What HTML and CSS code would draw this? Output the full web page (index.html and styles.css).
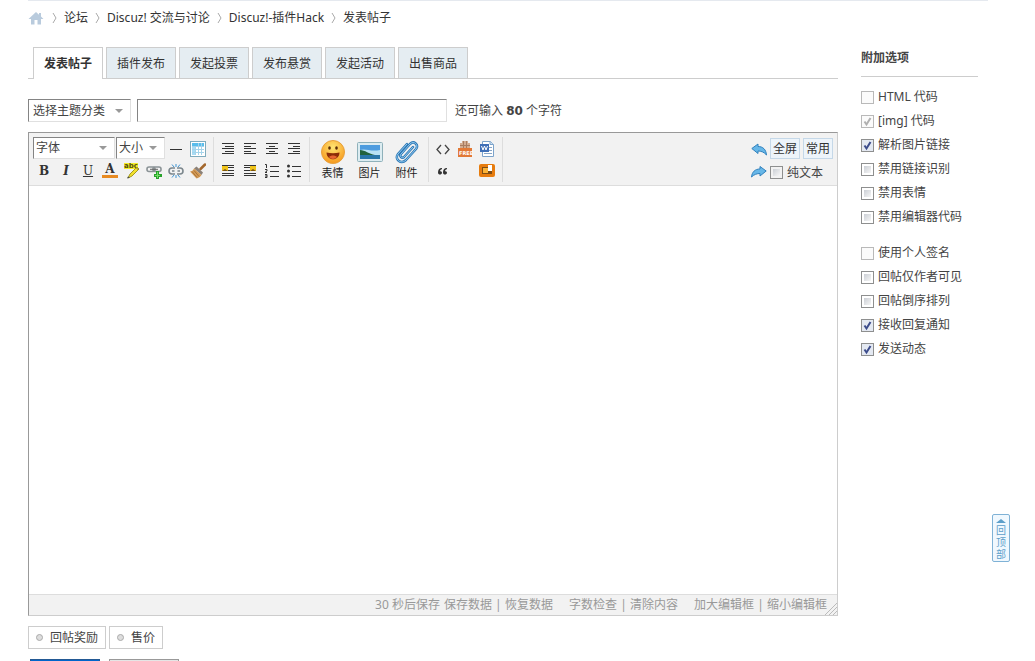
FILE: index.html
```html
<!DOCTYPE html>
<html lang="zh-CN">
<head>
<meta charset="utf-8">
<title>发表帖子</title>
<link rel="stylesheet" href="styles.css">
</head>
<body>
<div class="page">
  <nav class="crumbs">
    <a class="home" href="#" aria-label="首页"><svg width="16" height="14" viewBox="0 0 16 14"><path d="M8 1 0.5 8H3v5.500h3.500V9h3v4.500H13V8h2.500L13 5.600V2h-2v1.700z" fill="#b9cbdd"/></svg></a>
    <svg class="sep" width="19" height="14" viewBox="0 0 19 14"><path d="M8 2l3 5-3 5" fill="none" stroke="#aaa"/></svg>
    <a href="#">论坛</a>
    <svg class="sep" width="19" height="14" viewBox="0 0 19 14"><path d="M8 2l3 5-3 5" fill="none" stroke="#aaa"/></svg>
    <a href="#">Discuz! 交流与讨论</a>
    <svg class="sep" width="19" height="14" viewBox="0 0 19 14"><path d="M8 2l3 5-3 5" fill="none" stroke="#aaa"/></svg>
    <a href="#">Discuz!-插件Hack</a>
    <svg class="sep" width="19" height="14" viewBox="0 0 19 14"><path d="M8 2l3 5-3 5" fill="none" stroke="#aaa"/></svg>
    <a href="#">发表帖子</a>
  </nav>
  <div class="columns">
    <main class="main">
      <nav class="tabs">
        <a class="tab active" href="#">发表帖子</a>
        <a class="tab" href="#">插件发布</a>
        <a class="tab" href="#">发起投票</a>
        <a class="tab" href="#">发布悬赏</a>
        <a class="tab" href="#">发起活动</a>
        <a class="tab" href="#">出售商品</a>
      </nav>
      <div class="subject">
        <select class="drop drop-type" aria-label="主题分类"><option>选择主题分类</option></select>
        <input class="title" type="text" aria-label="标题">
        <span class="remain">还可输入 <strong>80</strong> 个字符</span>
      </div>
      <div class="editor">
        <div class="toolbar">
          <div class="group first">
            <div class="row">
              <select class="drop drop-font" aria-label="字体"><option>字体</option></select>
              <select class="drop drop-size" aria-label="大小"><option>大小</option></select>
              <button class="tool" aria-label="分隔线"><svg width="16" height="16"><path d="M2 8.500h12" stroke="#333"/></svg></button>
              <button class="tool" aria-label="表格"><svg width="16" height="16"><rect x=".5" y=".5" width="15" height="15" fill="#fff" stroke="#7fabbd"/><path d="M2 2h12v3H2z" fill="#58bdec"/><path d="M2 5h3v9H2z" fill="#a9dcf5"/><path d="M2 5.500h12M2 8.500h12M2 11.500h12M5.500 5v9M8.500 2v12M11.500 2v12" stroke="#a4d4eb"/></svg></button>
            </div>
            <div class="row">
              <button class="tool letter bold">B</button>
              <button class="tool letter italic">I</button>
              <button class="tool letter under">U</button>
              <button class="tool letter color"><span>A</span></button>
              <button class="tool" aria-label="背景色"><svg width="16" height="16" viewBox="0 0 16 16"><path d="M0 0h14v6H0z" fill="#f5ed27"/><text x="0" y="5" class="abc">abc</text><path d="M4 15l2-4 7-7 2 2-7 7z" fill="#f2e12d" stroke="#a59a21"/><path d="M3 15.500l1-2 2 1z" fill="#444"/><path d="M12 4.500l2.500 2.500" stroke="#8a7b3b"/></svg></button>
              <button class="tool" aria-label="添加链接"><svg width="16" height="16" viewBox="0 0 16 16"><g fill="none" stroke="#8b9396" stroke-width="1.600"><rect x="1" y="4" width="8" height="4.500" rx="2"/><rect x="7" y="4" width="8" height="4.500" rx="2"/></g><path d="M4 6.300h8" stroke="#666"/><path d="M10 8h3v3h3v3h-3v2h-3v-2H8v-3h2z" fill="#27a32b"/><path d="M11.500 9v6M9 12.500h5" stroke="#75dd68"/></svg></button>
              <button class="tool" aria-label="移除链接"><svg width="16" height="16" viewBox="0 0 16 16"><g fill="none" stroke="#7c878d" stroke-width="1.600"><path d="M7 5H4a3 3 0 000 6h3M9 5h3a3 3 0 010 6H9M4 8h2.500M9.500 8H12"/></g><path d="M8 4V1M6 4L4 1.500M10 4l2-2.500M8 12v3M6 12l-2 2.500M10 12l2 2.500" stroke="#3f94d2"/></svg></button>
              <button class="tool" aria-label="清除格式"><svg width="16" height="16" viewBox="0 0 16 16"><path d="M15 1.500L10.500 6" stroke="#a3672d" stroke-width="2.500" stroke-linecap="round"/><path d="M6.500 3.500l6.500 6-1.500 2.500L4 5.500z" fill="#8b8178"/><path d="M4 5.500l7.500 6.500c-1 2-3 3-5 3.500L0 8.500c2 0 3-1 4-3z" fill="#d49a55"/><path d="M2 8.500l5 6M4 7.500l5 6" stroke="#a8743a"/></svg></button>
            </div>
          </div>
          <div class="group">
            <div class="row">
              <button class="tool" aria-label="自动排版"><svg width="16" height="16"><path d="M2 2.500h12M5 5.500h9M2 7.500h12M5 10.500h9M2 12.500h12" stroke="#333"/></svg></button>
              <button class="tool" aria-label="居左"><svg width="16" height="16"><path d="M2 2.500h12M2 5.500h7M2 7.500h12M2 10.500h7M2 12.500h12" stroke="#333"/></svg></button>
              <button class="tool" aria-label="居中"><svg width="16" height="16"><path d="M2 2.500h12M5 5.500h6M2 7.500h12M5 10.500h6M2 12.500h12" stroke="#333"/></svg></button>
              <button class="tool" aria-label="居右"><svg width="16" height="16"><path d="M2 2.500h12M7 5.500h7M2 7.500h12M7 10.500h7M2 12.500h12" stroke="#333"/></svg></button>
            </div>
            <div class="row">
              <button class="tool" aria-label="左浮动"><svg width="16" height="16"><path d="M2 2.500h12M8 4.500h6M8 7.500h6M2 10.500h12M2 12.500h12" stroke="#333"/><path d="M2 3h6v5H2z" fill="#f0c419"/><path d="M2 8l3-2 3 2z" fill="#7a5412"/></svg></button>
              <button class="tool" aria-label="右浮动"><svg width="16" height="16"><path d="M2 2.500h12M2 4.500h6M2 7.500h6M2 10.500h12M2 12.500h12" stroke="#333"/><path d="M8 3h6v5H8z" fill="#f0c419"/><path d="M8 8l3-2 3 2z" fill="#7a5412"/></svg></button>
              <button class="tool" aria-label="编号列表"><svg width="16" height="16"><path d="M6 3.500h9M6 8.500h9M6 13.500h9M1 1.500h1.500V5M1 6.500h2v1.500l-2 1.500h2M1 11.500h2v3H1M1 13h2" fill="none" stroke="#333"/></svg></button>
              <button class="tool" aria-label="项目列表"><svg width="16" height="16"><path d="M6 3.500h9M6 8.500h9M6 13.500h9" stroke="#333"/><g fill="#333"><circle cx="2.500" cy="3" r="1.500"/><circle cx="2.500" cy="8" r="1.500"/><circle cx="2.500" cy="13" r="1.500"/></g></svg></button>
            </div>
          </div>
          <div class="group big">
            <button class="large"><svg width="26" height="26" viewBox="0 0 26 26"><defs><radialGradient id="face" cx=".5" cy=".3" r=".7"><stop offset="0" stop-color="#ffe573"/><stop offset="1" stop-color="#f6981c"/></radialGradient></defs><circle cx="13" cy="13" r="11.500" fill="url(#face)" stroke="#e8a13c"/><ellipse cx="9.500" cy="9" rx="1.300" ry="1.800" fill="#5a2c07"/><ellipse cx="16.500" cy="9" rx="1.300" ry="1.800" fill="#5a2c07"/><path d="M6.500 13.500c4 1 9 1 13 0 0 9-13 9-13 0z" fill="#8c2c08"/><path d="M9 18c2-2 6-2 8 0-2 2.500-6 2.500-8 0z" fill="#e76431"/></svg>表情</button>
            <button class="large"><svg width="26" height="26" viewBox="0 0 26 26"><rect x=".5" y="3.500" width="25" height="19" rx="1" fill="#dcecf1" stroke="#8fb1ba"/><path d="M3 6h20v14H3z" fill="#4d9cdf"/><path d="M3 11c6-2 10 2 20 0v5H3z" fill="#b9e2f5"/><path d="M3 11c5 0 9 4 15 5H3z" fill="#23633d"/><path d="M3 16h20v4H3z" fill="#2b77a9"/></svg>图片</button>
            <button class="large"><svg width="26" height="26" viewBox="0 0 26 26"><g fill="none" stroke-linecap="round"><path d="M19 8l-9 10c-2 2-5-1-3-3l9-10c4-4 9 1 6 5L12 21c-5 5-12-1-8-6l9-10" stroke="#2e78b5" stroke-width="2.500"/><path d="M19 8l-9 10c-2 2-5-1-3-3l9-10c4-4 9 1 6 5L12 21c-5 5-12-1-8-6l9-10" stroke="#8fc9ef"/></g></svg>附件</button>
          </div>
          <div class="group codes">
            <div class="row">
              <button class="tool" aria-label="代码"><svg width="16" height="16"><path d="M6 4L2 8.500 6 13M10 4l4 4.500L10 13" fill="none" stroke="#444" stroke-width="1.300"/></svg></button>
              <button class="tool" aria-label="免费信息"><svg width="16" height="16" viewBox="0 0 16 16"><path d="M5 0h6v2h2v5H3V2h2z" fill="#d3ad91"/><path d="M6.500 0v7M9.500 0v7M3 4.500h10" stroke="#a77c60"/><path d="M1 7h14v9H1z" fill="#e27935"/><text x="2" y="14" class="free">FREE</text></svg></button>
              <button class="tool" aria-label="从 Word 粘贴"><svg width="16" height="16" viewBox="0 0 16 16"><path d="M3.500.5h8l3 3v12h-11z" fill="#fff" stroke="#7ca3ca"/><path d="M11 .5v3h3.500" fill="#cfe3f5" stroke="#7ca3ca"/><path d="M10 6.500h3M10 9.500h3M5 12.500h8" stroke="#86a5c7"/><path d="M1 3h9v8H1z" fill="#3f6fb7"/><path d="M2.500 5l1.500 4 1.500-4L7 9l1.500-4" fill="none" stroke="#fff"/></svg></button>
            </div>
            <div class="row">
              <button class="tool" aria-label="引用"><svg width="16" height="16"><path d="M7 5C4 5 3 7 3 9.500c0 3 4 2.500 4 .3C7 8.500 6 8 5 8.200 5 7 6 6.500 7 6zM12 5C9 5 8 7 8 9.500c0 3 4 2.500 4 .3 0-1.300-1-1.800-2-1.600C10 7 11 6.500 12 6z" fill="#333"/></svg></button>
              <span class="tool"></span>
              <button class="tool" aria-label="隐藏内容"><svg width="16" height="16"><rect y="1" width="16" height="13" rx="2" fill="#e77c0e"/><path d="M3 4h10v7H3z" fill="#7d4c14"/><path d="M4 5h5v5H4z" fill="#fbb337"/><path d="M9 2h4v6H9z" fill="#fff"/></svg></button>
            </div>
          </div>
          <div class="actions">
            <button class="tool" aria-label="撤销"><svg width="16" height="16" viewBox="0 0 16 16"><path d="M.8 7.500L7 3v2.500c5 0 8 3 8.500 8.500C13 11 10 10 7 10v2.500z" fill="#67b7e8" stroke="#3181bd"/></svg></button>
            <div class="pair"><button class="mode">全屏</button><button class="mode">常用</button></div>
            <button class="tool" aria-label="重做"><svg width="16" height="16" viewBox="0 0 16 16"><path d="M15.200 7L9 2.500V5C4 5 1 8 .5 13 3 10.500 6 9.500 9 9.500V12z" fill="#67b7e8" stroke="#3181bd"/></svg></button>
            <label class="check plain"><input type="checkbox">纯文本</label>
          </div>
        </div>
        <textarea class="content" aria-label="帖子内容"></textarea>
        <div class="status">
          <div><span class="countdown">30 秒后保存</span><a href="#">保存数据</a><i>|</i><a href="#">恢复数据</a></div>
          <div><a href="#">字数检查</a><i>|</i><a href="#">清除内容</a></div>
          <div><a href="#">加大编辑框</a><i>|</i><a href="#">缩小编辑框</a></div>
          <svg class="grip" width="12" height="12"><path d="M0 12L12 0M4 12l8-8M8 12l4-4" stroke="#bbb"/></svg>
        </div>
      </div>
      <div class="extras">
        <button class="extra">回帖奖励</button>
        <button class="extra">售价</button>
      </div>
      <div class="submit">
        <button class="btn primary" aria-label="发表帖子"></button>
        <button class="btn" aria-label="保存草稿"></button>
      </div>
    </main>
    <aside class="side">
      <h2>附加选项</h2>
      <div class="options">
        <label class="check"><input type="checkbox" disabled>HTML 代码</label>
        <label class="check"><input type="checkbox" disabled checked>[img] 代码</label>
        <label class="check"><input type="checkbox" checked>解析图片链接</label>
        <label class="check"><input type="checkbox">禁用链接识别</label>
        <label class="check"><input type="checkbox">禁用表情</label>
        <label class="check"><input type="checkbox">禁用编辑器代码</label>
      </div>
      <div class="options">
        <label class="check"><input type="checkbox" disabled>使用个人签名</label>
        <label class="check"><input type="checkbox">回帖仅作者可见</label>
        <label class="check"><input type="checkbox">回帖倒序排列</label>
        <label class="check"><input type="checkbox" checked>接收回复通知</label>
        <label class="check"><input type="checkbox" checked>发送动态</label>
      </div>
    </aside>
  </div>
</div>
<a class="totop" href="#"><svg width="10" height="6"><path d="M5 1l5 4H0z" fill="#5d9fca"/></svg><span>回</span><span>顶</span><span>部</span></a>
</body>
</html>
```
FILE: styles.css
```css
* { box-sizing: border-box; }
body {
  margin: 0;
  height: 100vh;
  overflow: hidden;
  background: #fff;
  color: #444;
  font: 12px/18px "Noto Sans", "Noto Sans CJK SC", sans-serif;
}
button, input, select, textarea { font: inherit; color: inherit; margin: 0; }
a { color: inherit; text-decoration: none; }
svg { display: block; flex: none; }

.page { margin: 0 47px 0 28px; border-top: 1px solid #e5e9ef; }
.crumbs { display: flex; align-items: center; height: 34px; color: #333; }
.home { margin-right: 1px; }

.columns { display: flex; gap: 23px; padding-right: 10px; }
.main { flex: 1; min-width: 0; padding-top: 12px; }
.side { flex: none; width: 117px; padding-top: 13px; }

.tabs { display: flex; gap: 3px; height: 32px; padding-left: 5px; border-bottom: 1px solid #cdcdcd; }
.tab {
  height: 31px;
  padding: 0 10px;
  border: 1px solid #cdcdcd;
  border-bottom: 0;
  background: #e5edf2;
  color: #333;
  line-height: 31px;
}
.tab.active { height: 32px; background: #fff; font-weight: 700; }

.subject { display: flex; align-items: center; margin: 20px 0 10px; }
.drop, .title {
  height: 23px;
  border: 1px solid;
  border-color: #848484 #e0e0e0 #e0e0e0 #848484;
  border-radius: 0;
  background-color: #fff;
}
.drop {
  appearance: none;
  padding: 0 4px;
  background-image: url("data:image/svg+xml,%3Csvg xmlns='http://www.w3.org/2000/svg' width='8' height='4'%3E%3Cpath d='M0 0h8L4 4z' fill='%23999'/%3E%3C/svg%3E");
  background-repeat: no-repeat;
  background-position: right 7px center;
}
.drop-type { width: 103px; }
.title { width: 310px; margin: 0 8px 0 6px; }
.remain strong { font-family: "DejaVu Sans", sans-serif; }

.editor { border: 1px solid #cdcdcd; border-top-color: #999; border-left-color: #999; }
.toolbar { display: flex; height: 53px; padding: 4px 4px 0; background: #f2f2f2; border-bottom: 1px solid #ddd; }
.group { height: 45px; padding: 0 4px 0 3px; border-right: 1px solid #ddd; }
.group.first { padding-left: 0; }
.row { display: flex; height: 22px; }
.drop-font { width: 82px; margin-right: 1px; height: 22px; padding: 0 2px; }
.drop-size { width: 49px; height: 22px; padding: 0 2px; }
.tool {
  display: flex;
  align-items: center;
  justify-content: center;
  width: 22px;
  height: 22px;
  padding: 1px 0 0;
  border: 0;
  background: none;
}
.letter { font: 700 12px/14px "DejaVu Serif", serif; color: #333; }
.italic { font-style: italic; }
.under { font-weight: 400; text-decoration: underline; }
.color span { width: 16px; height: 14px; border-bottom: 3px solid #e88b22; line-height: 11px; }
.abc { font: 700 7px "DejaVu Sans", sans-serif; fill: #544e10; }
.free { font: 700 5px "DejaVu Sans", sans-serif; fill: #fff; }
.big { display: flex; }
.large {
  display: flex;
  flex-direction: column;
  align-items: center;
  width: 37px;
  padding: 2px 0 0;
  border: 0;
  background: none;
  color: #222;
  font-size: 11px;
  line-height: 16px;
}
.big { padding: 0 3px 0 4px; }
.actions { display: grid; grid-template-columns: 22px auto; grid-auto-rows: 23px; align-items: center; margin-left: auto; }
.pair { display: flex; gap: 3px; }
.mode { width: 30px; height: 21px; padding: 0; border: 1px solid #c5d8e8; background: #edf4fa; color: #333; line-height: 18px; }
.content { display: block; width: 100%; height: 408px; padding: 4px; border: 0; outline: 0; resize: none; background: #fff; }
.status {
  position: relative;
  display: flex;
  justify-content: flex-end;
  gap: 16px;
  height: 21px;
  padding-right: 10px;
  border-top: 1px solid #ddd;
  background: #f2f2f2;
  color: #999;
  line-height: 19px;
}
.countdown { margin-right: 4px; }
.status i { display: inline-block; width: 13px; text-align: center; font-style: normal; }
.grip { position: absolute; right: 0; bottom: 0; }

.extras { display: flex; gap: 3px; margin-top: 10px; }
.extra {
  display: flex;
  align-items: center;
  height: 23px;
  padding: 0 8px;
  border: 1px solid #cdcdcd;
  background: #fff;
}
.extra::before { content: ""; width: 5px; height: 5px; margin-right: 7px; border: 1px solid #aaa; border-radius: 50%; background: #ddd; }
.extra { padding: 0 7px; }
.extra::before { margin-right: 7px; }
.submit { display: flex; gap: 9px; margin: 10px 0 0 2px; }
.btn { width: 70px; height: 23px; padding: 0; border: 1px solid #999; background: #e5e5e5; }
.btn.primary { border-color: #235994; background: #06c; }

.side h2 { margin: 0 0 8px; height: 29px; border-bottom: 1px solid #cdcdcd; font-size: 12px; line-height: 20px; }
.options { margin-bottom: 12px; }
.check { display: flex; align-items: center; gap: 4px; height: 24px; white-space: nowrap; }
.plain { height: 22px; padding-top: 2px; }
.check input {
  appearance: none;
  flex: none;
  width: 13px;
  height: 13px;
  border: 1px solid #8e8f8f;
  background: linear-gradient(135deg, #cbcfd5, #f6f6f6) content-box #f4f4f4;
  padding: 2px;
}
.check input:disabled { border-color: #b9b9b9; background: #fbfbfb; }
.check input:checked {
  padding: 0;
  background: #e4e9f2 url("data:image/svg+xml,%3Csvg xmlns='http://www.w3.org/2000/svg' width='11' height='11'%3E%3Cpath d='M2.500 5.500l2 3L8.500 2' fill='none' stroke='%233c4c8c' stroke-width='2'/%3E%3C/svg%3E") center no-repeat;
}
.check input:checked:disabled {
  background: #fbfbfb url("data:image/svg+xml,%3Csvg xmlns='http://www.w3.org/2000/svg' width='11' height='11'%3E%3Cpath d='M2.500 5.500l2 3L8.500 2' fill='none' stroke='%23b0b0b0' stroke-width='2'/%3E%3C/svg%3E") center no-repeat;
}

.totop {
  position: fixed;
  right: 25px;
  bottom: 99px;
  display: flex;
  flex-direction: column;
  align-items: center;
  width: 18px;
  height: 48px;
  padding-top: 3px;
  border: 1px solid #7fb2d6;
  border-radius: 2px;
  background: #f0f8fe;
  color: #5d9fca;
  font-size: 10px;
  line-height: 12px;
}
```
